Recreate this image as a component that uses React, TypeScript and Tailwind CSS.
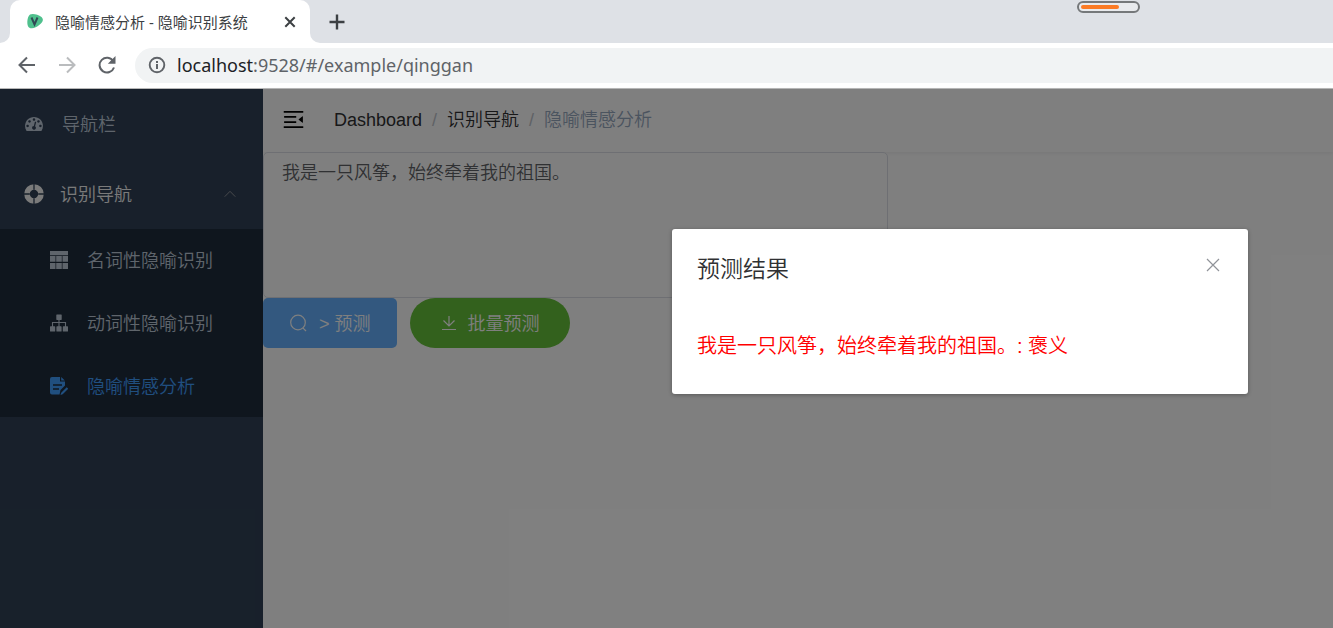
import type { ReactNode } from "react";

const sansCjk = "font-['Liberation_Sans','Noto_Sans_CJK_SC',sans-serif]";
const uiCjk = "font-['Noto_Sans','Noto_Sans_CJK_SC',sans-serif]";

function Favicon() {
  return (
    <svg viewBox="0 0 18 18" className="size-[18px] shrink-0" aria-hidden="true">
      <path d="M4 1.500C6 .2 12 1 15.500 4 18 6.500 17 9 13.500 11.800 10 14.800 6 16.500 3 14.500.5 12.800.8 4 4 1.500z" fill="#4fc08d" />
      <path d="M5.500 4.500 8.500 11.500 11.500 4.500" fill="none" stroke="#304a55" strokeWidth="2" />
    </svg>
  );
}

function TabStrip() {
  return (
    <div className="relative flex h-[43px] items-end bg-[#dee1e6]">
      <svg viewBox="0 0 10 10" className="size-[10px] shrink-0 fill-white" aria-hidden="true">
        <path d="M10 0v10H0A10 10 0 0 0 10 0z" />
      </svg>
      <div className="flex h-full w-[300px] items-center rounded-t-[10px] bg-white pr-[10px] pl-4">
        <Favicon />
        <span className="ml-[11px] flex-1 text-[15px] leading-5 whitespace-nowrap text-[#3c4043]">
          隐喻情感分析 - 隐喻识别系统
        </span>
        <button type="button" aria-label="关闭标签页" className="p-1">
          <svg viewBox="0 0 12 12" className="size-3 fill-none stroke-[#3c4043] stroke-2" aria-hidden="true">
            <path d="M1.300 1.300l9.400 9.400M10.700 1.300l-9.400 9.400" />
          </svg>
        </button>
      </div>
      <svg viewBox="0 0 10 10" className="size-[10px] shrink-0 fill-white" aria-hidden="true">
        <path d="M0 0v10h10A10 10 0 0 1 0 0z" />
      </svg>
      <button type="button" aria-label="新标签页" className="flex h-full items-center px-[9px]">
        <svg viewBox="0 0 16 16" className="size-4 fill-none stroke-[#3c4043]" aria-hidden="true">
          <path d="M8 .5v15M.5 8h15" strokeWidth="2.400" />
        </svg>
      </button>
      <div className="absolute top-px right-[193px] flex h-3 w-[63px] items-center rounded-full border-2 border-[#75787a] bg-[#e8eaed] px-0.5">
        <div className="h-1 w-[38px] rounded-full bg-[#fb7a24]" />
      </div>
    </div>
  );
}

function Toolbar() {
  return (
    <div className="flex h-[46px] items-center border-b border-[#b8b8b8] bg-white pb-px pl-[18px] text-[#5f6368]">
      <button type="button" aria-label="后退">
        <svg viewBox="0 0 18 18" className="size-[18px] fill-none stroke-[#5f6368] stroke-2" aria-hidden="true">
          <path d="M17 9H2M9 1.500 1.500 9 9 16.500" />
        </svg>
      </button>
      <button type="button" aria-label="前进" className="ml-[22px]">
        <svg viewBox="0 0 18 18" className="size-[18px] fill-none stroke-[#babcbe] stroke-2" aria-hidden="true">
          <path d="M1 9h15M9 1.500 16.500 9 9 16.500" />
        </svg>
      </button>
      <button type="button" aria-label="重新加载" className="ml-[22px]">
        <svg viewBox="0 0 18 18" className="size-[18px] fill-none stroke-[#5f6368] stroke-2" aria-hidden="true">
          <path d="M15.300 5.200A7.400 7.400 0 1 0 16 11.500" />
          <path d="M17.500 0v7.800H9.800z" className="fill-[#5f6368] stroke-none" />
        </svg>
      </button>
      <div className="ml-[19px] flex h-[35px] flex-1 items-center rounded-l-full bg-[#f1f3f4] pl-[13px]">
        <svg viewBox="0 0 18 18" className="size-[18px] shrink-0 fill-none stroke-[#5f6368]" aria-hidden="true">
          <circle cx="9" cy="9" r="7.300" strokeWidth="1.900" />
          <path d="M9 8v5M9 5v2" strokeWidth="2" />
        </svg>
        <span className="ml-[11px] text-[18px] leading-6">
          <span className="text-[#202124]">localhost</span>:9528/#/example/qinggan
        </span>
      </div>
    </div>
  );
}

const icons: Record<string, ReactNode> = {
  grid: (
    <svg viewBox="0 0 18 18" className="size-[18px] fill-current" aria-hidden="true">
      <path d="M0 0h18v4.200H0zM0 5h5.500v5.800H0zM6.200 5h5.600v5.800H6.200zM12.500 5H18v5.800h-5.500zM0 12h5.500v6H0zM6.200 12h5.600v6H6.200zM12.500 12H18v6h-5.500z" />
    </svg>
  ),
  tree: (
    <svg viewBox="0 0 18 18" className="size-[18px]" aria-hidden="true">
      <path d="M9 5v8M2.500 13V8.500h13V13" fill="none" stroke="currentColor" strokeWidth="1.100" />
      <g fill="currentColor">
        <rect x="6.300" y="0.500" width="5.400" height="5.400" rx="0.600" />
        <rect x="0" y="12.300" width="5.200" height="5.200" rx="0.600" />
        <rect x="6.400" y="12.300" width="5.200" height="5.200" rx="0.600" />
        <rect x="12.800" y="12.300" width="5.200" height="5.200" rx="0.600" />
      </g>
    </svg>
  ),
  form: (
    <svg viewBox="0 0 18 18" className="size-[18px] fill-current" aria-hidden="true">
      <path fillRule="evenodd" d="M2 0h8v4.500h5v4L10.500 13l-1 4.500H2a2 2 0 0 1-2-2V2a2 2 0 0 1 2-2zm1 7.300v1.500h9V7.300zm0 4v1.500h6v-1.500z" />
      <path d="M11.200 0 14.800 3.400h-3.600zM16.700 10.300l1.500 1.500-5.500 5.500-2.200.700.700-2.200z" />
    </svg>
  ),
};

const children = [
  { label: "名词性隐喻识别", icon: "grid", active: false },
  { label: "动词性隐喻识别", icon: "tree", active: false },
  { label: "隐喻情感分析", icon: "form", active: true },
];

function Sidebar() {
  return (
    <nav className="w-[263px] shrink-0 bg-[#304156] text-[18px] leading-6 font-[350] text-[#bfcbd9]">
      <a href="#/dashboard" className="flex h-[70px] items-center pl-[25px]">
        <svg viewBox="0 0 128 100" className="h-[14px] w-[18px] fill-current" aria-hidden="true">
          <path d="M27.429 63.638c0-2.508-.893-4.65-2.679-6.424-1.786-1.775-3.94-2.662-6.464-2.662-2.524 0-4.679.887-6.465 2.662-1.785 1.774-2.678 3.916-2.678 6.424 0 2.508.893 4.65 2.678 6.424 1.786 1.775 3.94 2.662 6.465 2.662 2.524 0 4.678-.887 6.464-2.662 1.786-1.775 2.679-3.916 2.679-6.424zm13.714-31.801c0-2.508-.893-4.65-2.679-6.424-1.785-1.775-3.94-2.662-6.464-2.662-2.524 0-4.679.887-6.464 2.662-1.786 1.774-2.679 3.916-2.679 6.424 0 2.508.893 4.65 2.679 6.424 1.785 1.774 3.94 2.662 6.464 2.662 2.524 0 4.679-.888 6.464-2.662 1.786-1.775 2.679-3.916 2.679-6.424zM71.714 65.98l7.215-27.116c.285-1.23.107-2.378-.536-3.443-.643-1.064-1.56-1.762-2.75-2.094-1.19-.33-2.333-.177-3.429.462-1.095.639-1.81 1.573-2.143 2.804l-7.214 27.116c-2.857.237-5.405 1.266-7.643 3.088-2.238 1.822-3.738 4.152-4.5 6.992-.952 3.644-.476 7.098 1.429 10.364 1.905 3.265 4.69 5.37 8.357 6.317 3.667.947 7.143.474 10.429-1.42 3.285-1.892 5.404-4.66 6.357-8.305.762-2.84.619-5.607-.429-8.305-1.047-2.697-2.762-4.85-5.143-6.46zm47.143-2.342c0-2.508-.893-4.65-2.678-6.424-1.786-1.775-3.94-2.662-6.465-2.662-2.524 0-4.678.887-6.464 2.662-1.786 1.774-2.679 3.916-2.679 6.424 0 2.508.893 4.65 2.679 6.424 1.786 1.775 3.94 2.662 6.464 2.662 2.524 0 4.679-.887 6.465-2.662 1.785-1.775 2.678-3.916 2.678-6.424zm-45.714-45.43c0-2.509-.893-4.65-2.679-6.425C68.68 10.01 66.524 9.122 64 9.122c-2.524 0-4.679.887-6.464 2.661-1.786 1.775-2.679 3.916-2.679 6.425 0 2.508.893 4.65 2.679 6.424 1.785 1.774 3.94 2.662 6.464 2.662 2.524 0 4.679-.888 6.464-2.662 1.786-1.775 2.679-3.916 2.679-6.424zm32 13.629c0-2.508-.893-4.65-2.679-6.424-1.785-1.775-3.94-2.662-6.464-2.662-2.524 0-4.679.887-6.464 2.662-1.786 1.774-2.679 3.916-2.679 6.424 0 2.508.893 4.65 2.679 6.424 1.785 1.774 3.94 2.662 6.464 2.662 2.524 0 4.679-.888 6.464-2.662 1.786-1.775 2.679-3.916 2.679-6.424zM128 63.638c0 12.351-3.357 23.78-10.071 34.286-.905 1.372-2.19 2.058-3.858 2.058H13.93c-1.667 0-2.953-.686-3.858-2.058C3.357 87.465 0 76.037 0 63.638c0-8.613 1.69-16.847 5.071-24.703C8.452 31.08 13 24.312 18.714 18.634c5.715-5.68 12.524-10.199 20.429-13.559C47.048 1.715 55.333.035 64 .035c8.667 0 16.952 1.68 24.857 5.04 7.905 3.36 14.714 7.88 20.429 13.559 5.714 5.678 10.262 12.446 13.643 20.301 3.38 7.856 5.071 16.09 5.071 24.703z" />
        </svg>
        <span className="ml-[19px] pt-0.5">导航栏</span>
      </a>
      <button type="button" aria-expanded="true" className="flex h-[70px] w-full items-center pr-[27px] pl-6 text-left font-[350] text-[#f4f4f5]">
        <svg viewBox="0 0 20 20" className="size-5" aria-hidden="true">
          <circle cx="10" cy="10" r="7" fill="none" stroke="currentColor" strokeWidth="5.600" />
          <path d="M10 0v5.800M10 14.200V20M0 10h5.800M14.200 10H20" stroke="#304156" strokeWidth="1.300" />
        </svg>
        <span className="ml-4 flex-1 pt-0.5">识别导航</span>
        <svg viewBox="0 0 12 8" className="h-2 w-3 fill-none stroke-[#909399] stroke-1" aria-hidden="true">
          <path d="M.7 6.700 6 1.300l5.300 5.400" />
        </svg>
      </button>
      <ul className="grid h-[188px] grid-rows-3 bg-[#1f2d3d]">
        {children.map((item) => (
          <li key={item.label}>
            <a href="#/example/qinggan" className={item.active ? "flex h-full items-center pl-[50px] text-[#409eff]" : "flex h-full items-center pl-[50px]"}>
              {icons[item.icon]}
              <span className="ml-[19px] pt-0.5">{item.label}</span>
            </a>
          </li>
        ))}
      </ul>
    </nav>
  );
}

function Navbar() {
  return (
    <header className="flex h-[63px] items-center bg-white pb-[3px] pl-[18px] shadow-[0_1px_4px_rgba(0,21,41,0.08)]">
      <button type="button" aria-label="折叠菜单">
        <svg viewBox="0 0 1024 1024" className="size-[25px] rotate-180" aria-hidden="true">
          <path d="M408 442h480c4.4 0 8-3.6 8-8v-56c0-4.4-3.6-8-8-8H408c-4.4 0-8 3.6-8 8v56c0 4.4 3.6 8 8 8zm-8 204c0 4.4 3.6 8 8 8h480c4.4 0 8-3.6 8-8v-56c0-4.4-3.6-8-8-8H408c-4.4 0-8 3.6-8 8v56zm504-486H120c-4.4 0-8 3.6-8 8v56c0 4.4 3.6 8 8 8h784c4.4 0 8-3.6 8-8v-56c0-4.4-3.6-8-8-8zm0 632H120c-4.4 0-8 3.6-8 8v56c0 4.4 3.6 8 8 8h784c4.4 0 8-3.6 8-8v-56c0-4.4-3.6-8-8-8zM142.4 642.1L298.7 519a8.84 8.84 0 0 0 0-13.9L142.4 381.9c-5.8-4.6-14.4-.5-14.4 6.9v246.3a8.9 8.9 0 0 0 14.4 7z" />
        </svg>
      </button>
      <nav aria-label="面包屑" className="ml-7 flex gap-[10px] pt-px text-[18px] leading-6 font-[350] text-[#303133]">
        <a href="#/dashboard">Dashboard</a>
        <span className="text-[#c0c4cc]">/</span>
        <a href="#/example">识别导航</a>
        <span className="text-[#c0c4cc]">/</span>
        <span className="text-[#97a8be]">隐喻情感分析</span>
      </nav>
    </header>
  );
}

function ResultDialog() {
  return (
    <div className="absolute inset-0 flex items-start justify-end bg-black/50 pt-[140px] pr-[85px]">
      <section role="dialog" aria-labelledby="result-title" className="w-[576px] rounded-[3px] bg-white px-[25px] pt-[26px] pb-[34px] shadow-[0_1px_4px_rgba(0,0,0,0.3)]">
        <div className="flex items-start justify-between">
          <h2 id="result-title" className="text-[23px] leading-7 font-[350] text-[#303133]">预测结果</h2>
          <button type="button" aria-label="关闭" className="p-[3px]">
            <svg viewBox="0 0 14 14" className="size-[14px] fill-none stroke-[#909399]" aria-hidden="true">
              <path d="M1 1l12 12M13 1 1 13" strokeWidth="1.200" />
            </svg>
          </button>
        </div>
        <p className="mt-[49px] text-[20px] leading-7 font-[350] text-[#ff0000]">我是一只风筝，始终牵着我的祖国。: 褒义</p>
      </section>
    </div>
  );
}

export default function App() {
  return (
    <div className={`flex min-h-screen flex-col bg-white ${uiCjk}`}>
      <TabStrip />
      <Toolbar />
      <div className={`relative flex flex-1 ${sansCjk}`}>
        <Sidebar />
        <main className="min-w-0 flex-1">
          <Navbar />
          <textarea
            aria-label="输入句子"
            defaultValue="我是一只风筝，始终牵着我的祖国。"
            className="block h-[146px] w-[625px] max-w-full resize-none rounded-[5px] border border-[#dcdfe6] bg-white px-[18px] py-[7px] text-[18px] leading-[26px] font-[350] text-[#606266]"
          />
          <div className="flex gap-[13px] text-[18px] leading-6 font-[350] text-white">
            <button type="button" className="flex h-[50px] items-center rounded-[5px] bg-[#66b1ff] px-[26px]">
              <svg viewBox="0 0 18 18" className="size-[18px] fill-none stroke-current" aria-hidden="true">
                <circle cx="9" cy="8.500" r="7.300" strokeWidth="1.200" />
                <path d="M13.800 13.800 17 17" strokeWidth="1.200" />
              </svg>
              <span className="ml-3 pt-px">&gt; 预测</span>
            </button>
            <button type="button" className="flex h-[50px] items-center rounded-full bg-[#67c23a] px-[30px]">
              <svg viewBox="0 0 18 18" className="size-[18px] fill-none stroke-current" aria-hidden="true">
                <path d="M9 2v9.500M3.500 6.500 9 12l5.500-5.500M2 15.500h14" strokeWidth="1.200" />
              </svg>
              <span className="ml-[10px] pt-px">批量预测</span>
            </button>
          </div>
        </main>
        <ResultDialog />
      </div>
    </div>
  );
}
